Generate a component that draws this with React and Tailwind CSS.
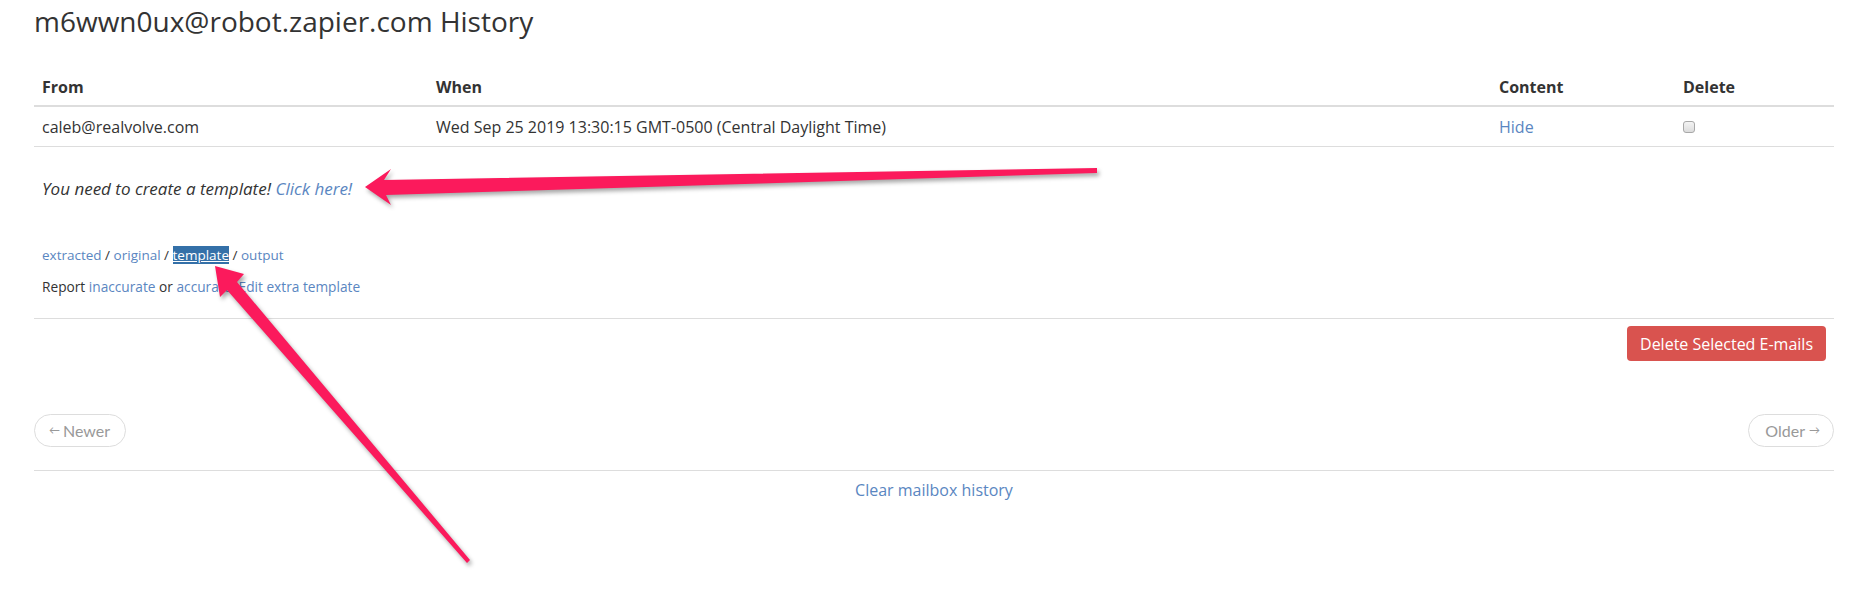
import React from "react";

const LINK = "text-[#5a86c1]";

const Arrows = () => (
  <svg
    className="absolute left-0 top-0 pointer-events-none drop-shadow-[2px_3px_2px_rgba(0,0,0,0.35)]"
    width="1864"
    height="606"
    viewBox="0 0 1864 606"
  >
    {/* arrow pointing at "Click here!" */}
    <polygon
      fill="#fb1a5c"
      points="365,187 391,169 384,180 1097,168 1097,173 386,195 391,205"
    />
    {/* arrow pointing at "template" */}
    <polygon
      fill="#fb1a5c"
      points="215,266 244,274 237,282 470,560 467,563 227,290 220,297"
    />
  </svg>
);

const App = () => {
  return (
    <div className="relative w-[1864px] h-[606px] bg-white overflow-hidden font-['Open_Sans',sans-serif] text-[#333]">
      <div className="pl-[34px] pr-[30px]">
        <h1 className="pt-[3px] text-[28px] leading-[36px] font-normal">
          m6wwn0ux@robot.zapier.com History
        </h1>

        {/* mailbox table */}
        <div className="mt-[30px] text-[16px]">
          <div className="grid grid-cols-[394px_1063px_184px_1fr] h-[38px] items-center border-b-2 border-[#ddd] font-bold">
            <div className="px-2">From</div>
            <div className="px-2">When</div>
            <div className="px-2">Content</div>
            <div className="px-2">Delete</div>
          </div>
          <div className="grid grid-cols-[394px_1063px_184px_1fr] h-[40px] items-center border-b border-[#ddd]">
            <div className="px-2">caleb@realvolve.com</div>
            <div className="px-2">
              Wed Sep 25 2019 13:30:15 GMT-0500 (Central Daylight Time)
            </div>
            <div className={`px-2 ${LINK}`}>Hide</div>
            <div className="px-2">
              <div className="w-[12px] h-[12px] rounded-[3px] border border-[#a8a8a8] bg-gradient-to-b from-[#f4f4f4] to-[#dcdcdc]" />
            </div>
          </div>
        </div>

        {/* template area */}
        <div className="px-2">
          <p className="mt-[30px] text-[17px] leading-[24px] italic">
            You need to create a template!{" "}
            <span className={LINK}>Click here!</span>
          </p>
          <p className="mt-[44px] text-[13.5px] leading-[20px]">
            <span className={LINK}>extracted</span> /{" "}
            <span className={LINK}>original</span> /{" "}
            <span className="bg-[#3470a8] text-white underline">template</span>{" "}
            / <span className={LINK}>output</span>
          </p>
          <p className="mt-[12px] text-[13.7px] leading-[20px]">
            Report <span className={LINK}>inaccurate</span> or{" "}
            <span className={LINK}>accurate</span>.{" "}
            <span className={LINK}>Edit extra template</span>
          </p>
        </div>

        <div className="mt-[21px] border-t border-[#ddd]" />

        <div className="flex justify-end pr-[8px] mt-[7px]">
          <button className="h-[35px] px-[13px] rounded-[4px] bg-[#d9534f] text-white text-[16px]">
            Delete Selected E-mails
          </button>
        </div>

        {/* pager */}
        <div className="flex justify-between mt-[53px] font-['Lato',sans-serif] text-[16px] text-[#999]">
          <div className="h-[33px] pl-[14px] pr-[15px] flex items-center gap-[3px] rounded-full border border-[#ddd]">
            <span className="text-[11px]">←</span>
            <span>Newer</span>
          </div>
          <div className="h-[33px] pl-[16px] pr-[13px] flex items-center gap-[4px] rounded-full border border-[#ddd]">
            <span>Older</span>
            <span className="text-[11px]">→</span>
          </div>
        </div>

        <div className="mt-[23px] border-t border-[#ddd]" />

        <p className={`mt-[8px] text-center text-[16px] leading-[22px] ${LINK}`}>
          Clear mailbox history
        </p>
      </div>

      <Arrows />
    </div>
  );
};

export default App;
